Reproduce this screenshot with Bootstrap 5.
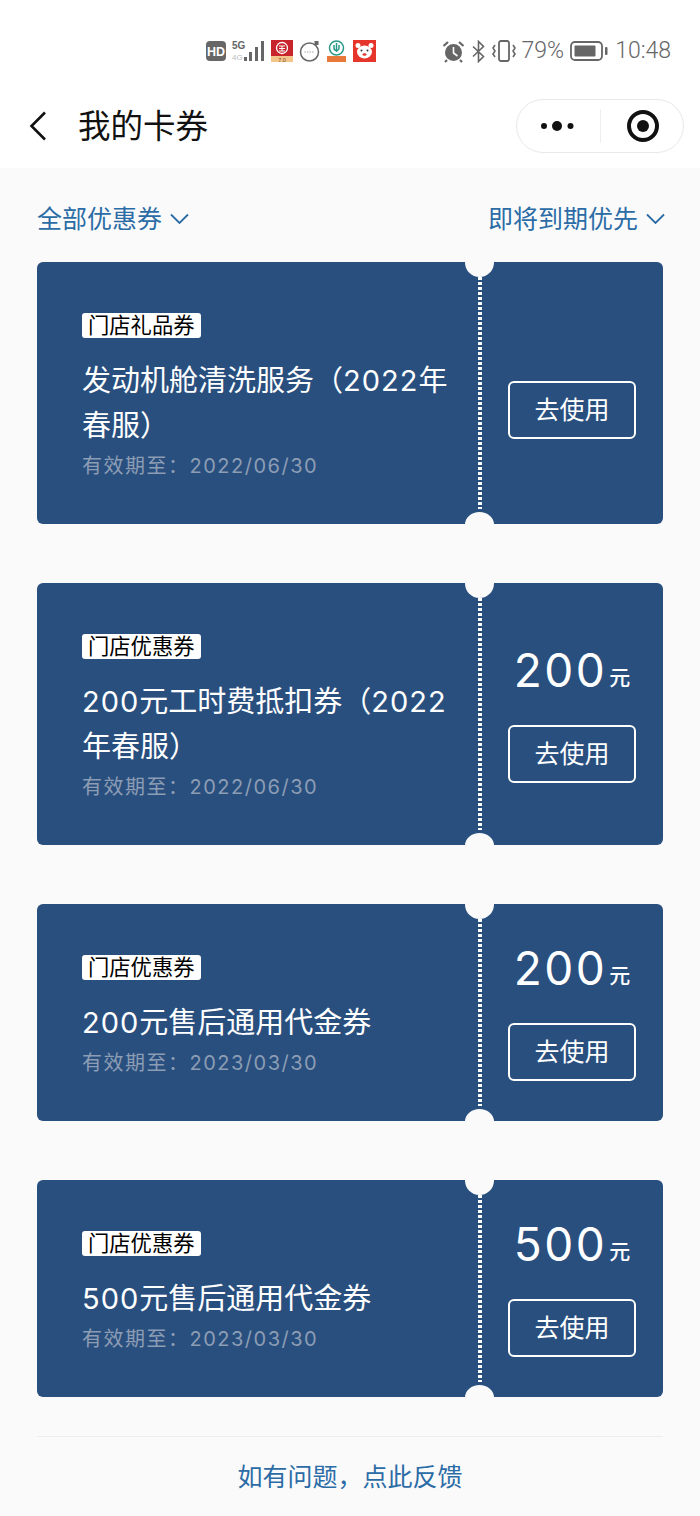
<!DOCTYPE html>
<html lang="zh-CN">
  <head>
    <meta charset="UTF-8" />
    <meta name="viewport" content="width=device-width, initial-scale=1" />
    <title>我的卡券</title>
    <link href="https://cdn.jsdelivr.net/npm/bootstrap@5.3.3/dist/css/bootstrap.min.css" rel="stylesheet" />
    <style>
      body {
        background-color: #fafafa;
        font-family: Inter, "Noto Sans CJK SC", sans-serif;
        width: 700px;
        height: 1516px;
        overflow: hidden;
      }
      .status-bar { height: 84px; padding: 37px 29px 0 206px; background: #fff; color: #666; }
      .status-group { gap: 6px; height: 28px; }
      .status-text { font-family: Roboto, sans-serif; font-size: 23px; font-weight: 300; line-height: 28px; }
      .status-time { margin-left: 1px; }
      .top-bar { height: 84px; padding: 0 16px 0 29px; background: #fff; }
      .page-title { font-size: 32.5px; line-height: 46px; color: #111; margin: 2px 0 0 31px; font-weight: 400; }
      .capsule { width: 168px; height: 54px; border: 1px solid #e8e8e8; border-radius: 27px; background: #fff; }
      .cap-dots { margin-left: 23px; }
      .capsule-line { width: 1px; height: 34px; background: #eee; margin-left: 22px; }
      .cap-target { margin-left: 25px; }
      .filter-row { height: 94px; padding: 8px 35px 0 37px; }
      .filter-text { font-size: 25px; line-height: 36px; color: #2b6ca6; }
      .coupon-list { padding: 0 37px; gap: 59px; }
      .coupon { background: #294f7f; border-radius: 6px; color: #fff; position: relative; overflow: hidden; }
      .notch { position: absolute; left: 428px; width: 29px; background: #fafafa; border-radius: 50%; }
      .notch-top { top: -14.5px; height: 29px; }
      .notch-bottom { bottom: -12.5px; height: 25px; }
      .coupon-main { width: 441px; padding: 51px 25px 43px 45px; }
      .coupon-tag { width: fit-content; height: 25px; padding: 0 6px; background: #fff; color: #000; font-size: 21.3px; line-height: 25px; border-radius: 3px; }
      .coupon-title { font-size: 29px; line-height: 45px; margin: 20px 0 3px; font-weight: 400; }
      .title-num { letter-spacing: 1px; }
      .coupon-date { font-size: 20px; letter-spacing: 1.5px; line-height: 30px; color: #8c9db4; }
      .coupon-side {
        width: 185px;
        padding-left: 3px;
        background: repeating-linear-gradient(#fff 0 3px, transparent 3px 5px) left center / 4px calc(100% - 30px) no-repeat;
      }
      .price { height: 50px; margin-bottom: 29px; line-height: 48px; }
      .price-empty { height: 34px; }
      .price-num { font-size: 46px; letter-spacing: 2.5px; font-weight: 400; }
      .price-unit { font-size: 21px; margin-left: 2px; vertical-align: 2px; font-weight: 500; }
      .btn-use {
        width: 128px;
        height: 58px;
        padding: 0;
        border: 2px solid #fff;
        border-radius: 6px;
        color: #fff;
        font-size: 25px;
        line-height: 52px;
      }
      .footer-link { margin: 39px 37px 0; border-top: 1px solid #eee; padding-top: 22px; font-size: 25px; line-height: 36px; color: #2b6ca6; }
    </style>
  </head>
  <body>
    <div class="status-bar d-flex align-items-start">
      <div class="status-group d-flex align-items-center">
        <svg width="20" height="20" viewBox="0 0 20 20"><rect width="20" height="20" rx="4" fill="#666"/><text x="10" y="14.5" font-size="12.5" font-weight="700" fill="#fff" text-anchor="middle" font-family="Liberation Sans">HD</text></svg>
        <svg width="33" height="22" viewBox="0 0 33 22"><text x="0" y="9" font-size="10" font-weight="700" fill="#666" font-family="Liberation Sans">5G</text><text x="0" y="20" font-size="8" fill="#bbb" font-family="Liberation Sans">4G</text><g fill="#666"><rect x="12" y="17" width="3" height="4"/><rect x="17" y="12" width="3" height="9"/><rect x="23" y="7" width="3" height="14"/><rect x="29" y="1" width="3" height="20"/></g></svg>
        <svg width="22" height="22" viewBox="0 0 22 22"><rect width="22" height="16" fill="#c8242c"/><rect y="16" width="22" height="6" fill="#f3c48c"/><circle cx="11" cy="8" r="5.5" fill="none" stroke="#fff" stroke-width="1.3"/><path d="M8 6h6M8 8.500h6M11 6v5M8 11h6" stroke="#fff" stroke-width="1"/><text x="11" y="21.500" font-size="5.500" fill="#7a4a20" text-anchor="middle" font-family="Liberation Sans">7.0</text></svg>
        <svg width="21" height="22" viewBox="0 0 21 22"><circle cx="10.500" cy="12" r="9" fill="#fff" stroke="#666" stroke-width="1.500"/><rect x="15.500" y="1" width="4" height="4" fill="#666"/><path d="M5.500 12h10" stroke="#aaa" stroke-width="1.200" stroke-dasharray="1.500 1"/></svg>
        <svg width="21" height="22" viewBox="0 0 21 22"><circle cx="10.500" cy="8" r="7" fill="none" stroke="#2a9a88" stroke-width="1.500"/><path d="M10.500 3v9M8 5v3a2.500 2.500 0 0 0 5 0V5" fill="none" stroke="#2a9a88" stroke-width="1.500"/><rect x="1" y="16" width="19" height="6" fill="#e8793a"/></svg>
        <svg width="23" height="22" viewBox="0 0 23 22"><rect width="23" height="22" fill="#e6352b"/><ellipse cx="11.500" cy="12" rx="7.500" ry="6.500" fill="#fff"/><circle cx="5" cy="5.500" r="2.500" fill="#fff"/><circle cx="18" cy="5.500" r="2.500" fill="#fff"/><circle cx="8.500" cy="10.500" r="1" fill="#333"/><circle cx="14.500" cy="10.500" r="1" fill="#333"/><ellipse cx="11.500" cy="14.500" rx="2" ry="1.300" fill="#e6352b"/></svg>
      </div>
      <div class="status-group d-flex align-items-center ms-auto">
        <svg width="23" height="23" viewBox="0 0 23 23"><circle cx="11.500" cy="12.500" r="8.500" fill="#666"/><path d="M11.500 7v6l4 3" fill="none" stroke="#fff" stroke-width="1.600"/><path d="M1.500 6 6 2M21.500 6 17 2M5 20l-2 2M18 20l2 2" stroke="#666" stroke-width="2.200"/></svg>
        <svg width="15" height="23" viewBox="0 0 15 23"><path d="M2 6.500 12.500 16.500 7.500 21.500V1.500L12.500 6.500 2 16.500" fill="none" stroke="#666" stroke-width="1.600"/></svg>
        <svg width="24" height="22" viewBox="0 0 24 22"><rect x="7" y="1" width="10" height="20" rx="2" fill="none" stroke="#666" stroke-width="1.800"/><path d="M3 5 1 8l2 3-2 3 2 3M21 5l2 3-2 3 2 3-2 3" fill="none" stroke="#666" stroke-width="1.600"/></svg>
        <span class="status-text">79%</span>
        <svg width="38" height="22" viewBox="0 0 38 22"><rect x="1" y="2" width="31" height="18" rx="4" fill="none" stroke="#666" stroke-width="1.800"/><rect x="4.500" y="5.500" width="21" height="11" rx="1" fill="#666"/><rect x="35" y="7" width="2.500" height="8" rx="1" fill="#666"/></svg>
        <span class="status-text status-time">10:48</span>
      </div>
    </div>

    <div class="top-bar d-flex align-items-center">
      <svg width="18" height="30" viewBox="0 0 18 30"><path d="M16 1.500 2.500 15 16 28.500" fill="none" stroke="#111" stroke-width="2.600"/></svg>
      <h1 class="page-title">我的卡券</h1>
      <div class="capsule ms-auto d-flex align-items-center">
        <svg class="cap-dots" width="38" height="12" viewBox="0 0 38 12"><circle cx="4" cy="6" r="3" fill="#111"/><circle cx="17" cy="6" r="5" fill="#111"/><circle cx="30.500" cy="6" r="3" fill="#111"/></svg>
        <div class="capsule-line"></div>
        <svg class="cap-target" width="34" height="34" viewBox="0 0 34 34"><circle cx="17" cy="17" r="14" fill="none" stroke="#111" stroke-width="4"/><circle cx="17" cy="17" r="6" fill="#111"/></svg>
      </div>
    </div>

    <div class="filter-row d-flex justify-content-between align-items-center">
      <div class="filter-text d-flex align-items-center">全部优惠券
        <svg class="ms-2" width="19" height="12" viewBox="0 0 19 12"><path d="M1 1.500 9.500 10 18 1.500" fill="none" stroke="#2b6ca6" stroke-width="1.800"/></svg>
      </div>
      <div class="filter-text d-flex align-items-center">即将到期优先
        <svg class="ms-2" width="19" height="12" viewBox="0 0 19 12"><path d="M1 1.500 9.500 10 18 1.500" fill="none" stroke="#2b6ca6" stroke-width="1.800"/></svg>
      </div>
    </div>

    <div id="coupons" class="coupon-list d-flex flex-column"></div>

    <div class="footer-link text-center">如有问题，点此反馈</div>

    <script>
      const coupons = [
        { tag: "门店礼品券", title: "发动机舱清洗服务（2022年<br>春服）", date: "2022/06/30", price: "" },
        { tag: "门店优惠券", title: "200元工时费抵扣券（2022<br>年春服）", date: "2022/06/30", price: "200" },
        { tag: "门店优惠券", title: "200元售后通用代金券", date: "2023/03/30", price: "200" },
        { tag: "门店优惠券", title: "500元售后通用代金券", date: "2023/03/30", price: "500" }
      ];
      const list = document.getElementById("coupons");
      coupons.forEach(c => {
        const price = c.price
          ? `<div class="price"><span class="price-num">${c.price}</span><span class="price-unit">元</span></div>`
          : `<div class="price-empty"></div>`;
        const title = c.title.replace(/\d+/g, n => `<span class="title-num">${n}</span>`);
        const item = document.createElement("div");
        item.className = "coupon d-flex";
        item.innerHTML = `
          <div class="coupon-main">
            <div class="coupon-tag">${c.tag}</div>
            <h2 class="coupon-title">${title}</h2>
            <div class="coupon-date">有效期至：${c.date}</div>
          </div>
          <div class="coupon-side d-flex flex-column align-items-center justify-content-center">
            ${price}
            <button class="btn btn-use">去使用</button>
          </div>
          <span class="notch notch-top"></span>
          <span class="notch notch-bottom"></span>
        `;
        list.appendChild(item);
      });
    </script>
    <script src="https://cdn.jsdelivr.net/npm/bootstrap@5.3.3/dist/js/bootstrap.bundle.min.js"></script>
  </body>
</html>
